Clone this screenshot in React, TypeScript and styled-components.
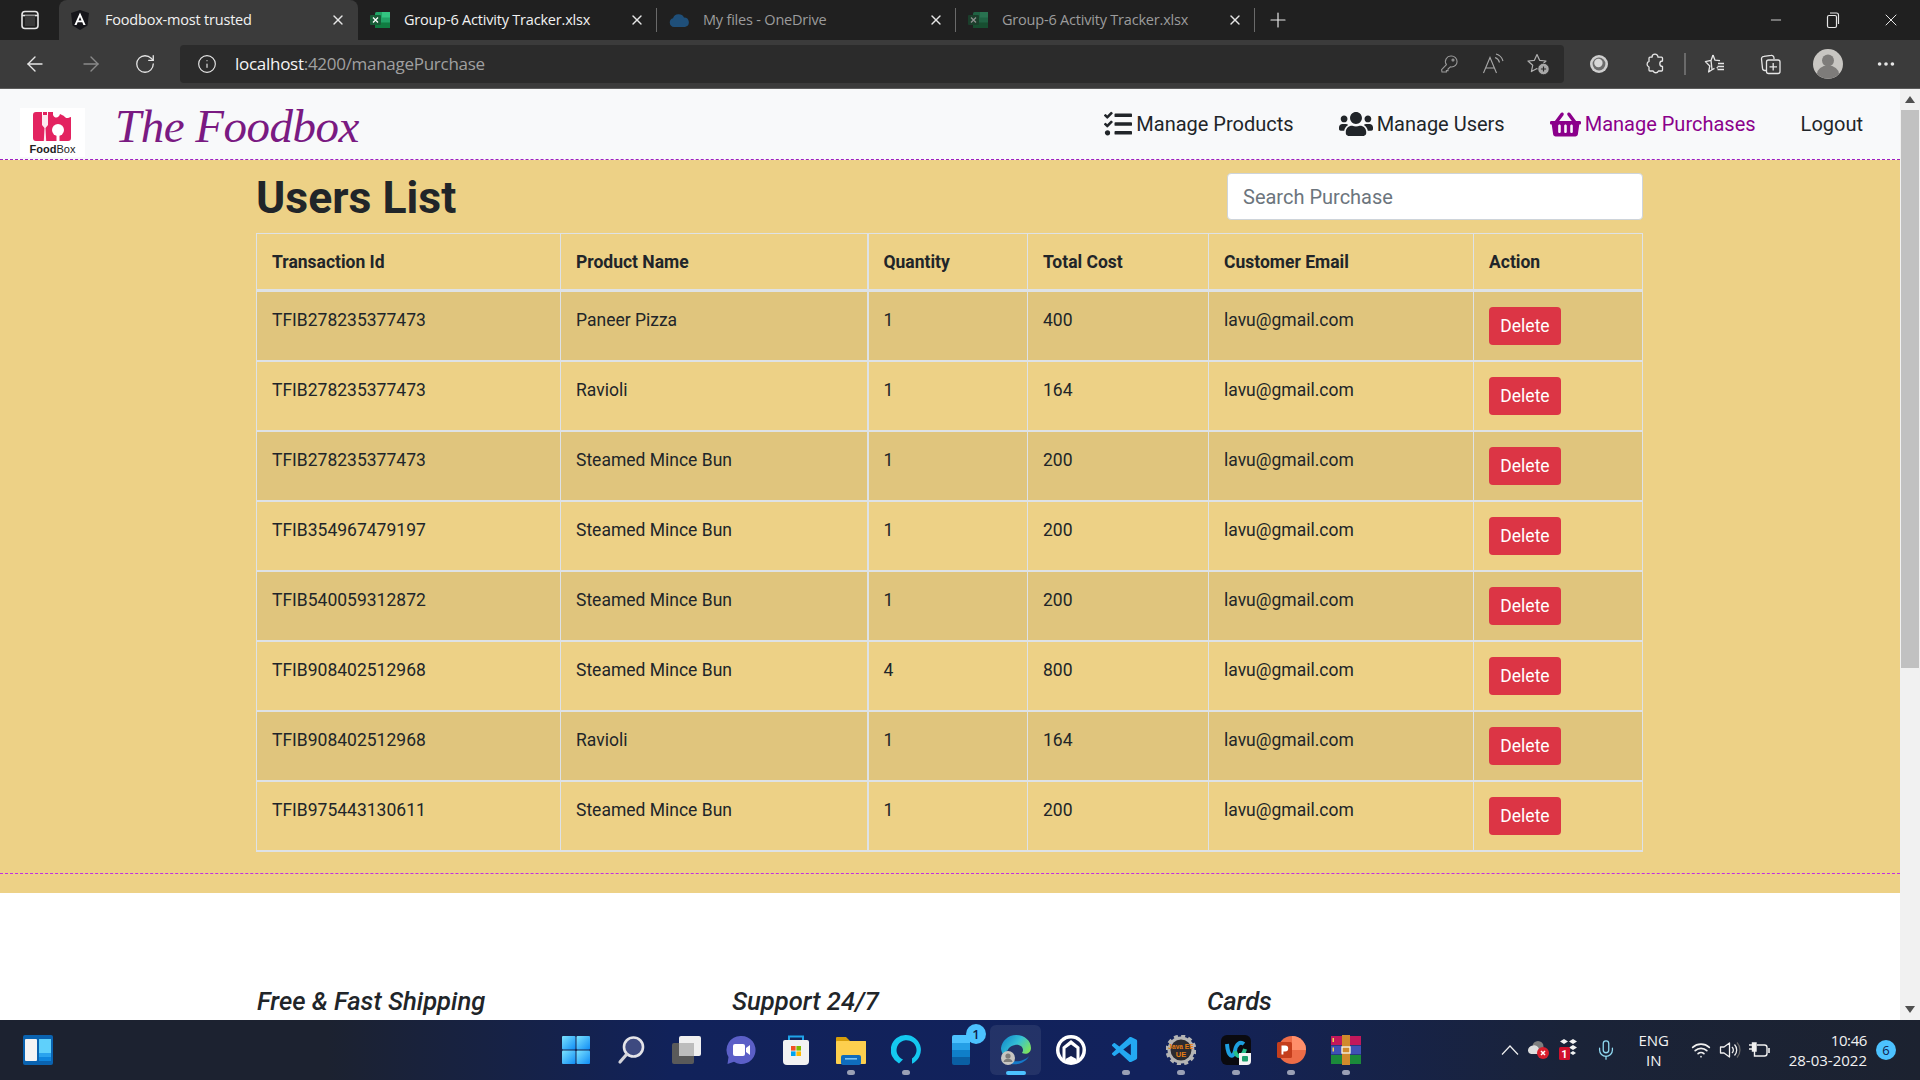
import React from 'react';
import styled, { createGlobalStyle } from 'styled-components';
import { ArrowLeft, ArrowRight, Info, Mic, Minus, MoreHorizontal, Plus, RotateCw, Wifi, X } from 'lucide-react';
import { FaShoppingBasket, FaTasks, FaUsers } from 'react-icons/fa';
import { VscVscode } from 'react-icons/vsc';

const GlobalStyle = createGlobalStyle`
  html, body {
    margin: 0;
    padding: 0;
    overflow: hidden;
    font-family: 'Roboto', sans-serif;
  }
  * {
    box-sizing: border-box;
  }
`;

interface Purchase {
  id: string;
  product: string;
  quantity: number;
  cost: number;
}

const purchases: Purchase[] = [
  { id: 'TFIB278235377473', product: 'Paneer Pizza', quantity: 1, cost: 400 },
  { id: 'TFIB278235377473', product: 'Ravioli', quantity: 1, cost: 164 },
  { id: 'TFIB278235377473', product: 'Steamed Mince Bun', quantity: 1, cost: 200 },
  { id: 'TFIB354967479197', product: 'Steamed Mince Bun', quantity: 1, cost: 200 },
  { id: 'TFIB540059312872', product: 'Steamed Mince Bun', quantity: 1, cost: 200 },
  { id: 'TFIB908402512968', product: 'Steamed Mince Bun', quantity: 4, cost: 800 },
  { id: 'TFIB908402512968', product: 'Ravioli', quantity: 1, cost: 164 },
  { id: 'TFIB975443130611', product: 'Steamed Mince Bun', quantity: 1, cost: 200 },
];

const AngularIcon = () => (
  <svg width="18" height="20" viewBox="0 0 18 20">
    <path d="M9 0 L18 3 L16.5 15.5 L9 20 L1.5 15.5 L0 3 Z" fill="#15151a" />
    <path d="M9 2.5 L14.6 15 H12.4 L11.3 12.2 H6.7 L5.6 15 H3.4 Z M9 7 L7.5 10.4 H10.5 Z" fill="#fff" />
  </svg>
);

const ExcelIcon = ({ dim }: { dim?: boolean }) => (
  <svg width="20" height="20" viewBox="0 0 20 20" opacity={dim ? 0.5 : 1}>
    <rect x="5" y="2" width="15" height="16" rx="1.5" fill="#21a366" />
    <rect x="12" y="2" width="8" height="5.5" fill="#33c481" />
    <rect x="5" y="12.5" width="15" height="5.5" fill="#107c41" />
    <rect x="0" y="5" width="11" height="10" rx="1" fill="#185c37" />
    <path d="M3 7.5 L8 12.5 M8 7.5 L3 12.5" stroke="#fff" strokeWidth="1.3" />
  </svg>
);

const CloudIcon = () => (
  <svg width="20" height="14" viewBox="0 0 20 14" opacity={0.6}>
    <path d="M5 14 A4.5 4.5 0 0 1 4 5.2 A6 6 0 0 1 15 4.5 A4.8 4.8 0 0 1 16 14 Z" fill="#1f6fb5" />
  </svg>
);

const TabsIcon = () => (
  <svg width="20" height="20" viewBox="0 0 20 20" fill="none" stroke="#e6e6e6" strokeWidth="1.6">
    <rect x="2" y="1.5" width="16" height="17" rx="3" />
    <path d="M2 5.5 H18" />
    <rect x="5" y="5.5" width="10" height="10.5" fill="#3a3a3a" stroke="none" />
  </svg>
);

const RestoreIcon = () => (
  <svg width="16" height="20" viewBox="0 0 16 20" fill="none" stroke="#e6e6e6" strokeWidth="1.2">
    <rect x="2.5" y="5.5" width="9" height="12" rx="1.5" />
    <path d="M5 3 H11.5 A2 2 0 0 1 13.5 5 V14" />
  </svg>
);

const KeyIcon = () => (
  <svg width="20" height="20" viewBox="0 0 20 20" fill="none" stroke="#9a9a9a" strokeWidth="1.1">
    <path d="M12.5 2 A5.5 5.5 0 0 1 12.6 13 L11.4 12.8 L9 15 V16.6 H7.4 V18 H3 L2.6 15.6 L7.4 10.6 A5.5 5.5 0 0 1 12.5 2 Z" />
    <circle cx="14" cy="6" r="1" />
  </svg>
);

const ReadAloudIcon = () => (
  <svg width="22" height="22" viewBox="0 0 22 22" fill="none" stroke="#a8a8a8" strokeWidth="1.1">
    <path d="M1.5 20 L8 4.5 L14.5 20 M3.6 15 H12.4" />
    <path d="M13 4.5 A7 7 0 0 1 17.5 9.5 M14 1 A10 10 0 0 1 21 8" />
  </svg>
);

const AddFavIcon = () => (
  <svg width="23" height="22" viewBox="0 0 23 22" fill="none">
    <path d="M10 1.5 L12.6 7.3 L19 8 L14.3 12.3 L15.6 18.6 L10 15.4 L4.4 18.6 L5.7 12.3 L1 8 L7.4 7.3 Z" stroke="#b0b0b0" strokeWidth="1.2" strokeLinejoin="round" />
    <circle cx="16.5" cy="16" r="5.7" fill="#a8a8a8" stroke="#2b2b2b" strokeWidth="0.8" />
    <path d="M16.5 13.4 V18.6 M13.9 16 H19.1" stroke="#2b2b2b" strokeWidth="1.2" />
  </svg>
);

const CircleExtension = () => (
  <svg width="20" height="20" viewBox="0 0 20 20">
    <circle cx="10" cy="10" r="9" fill="#cfcfcf" />
    <circle cx="10" cy="10" r="6.4" fill="#6c6c6c" />
    <circle cx="9.4" cy="9" r="4.2" fill="#d8d8d8" />
  </svg>
);

const ExtensionIcon = () => (
  <svg width="22" height="22" viewBox="0 0 22 22" fill="none" stroke="#e6e6e6" strokeWidth="1.3" strokeLinejoin="round">
    <path d="M8 4.2 A3 3 0 0 1 14 4.2 H17.5 Q18.5 4.2 18.5 5.2 V8 A2.6 2.6 0 0 0 18.5 13.4 V17 Q18.5 18 17.5 18 H14.4 A2.8 2.8 0 0 1 9.2 18 H6 Q5 18 5 17 V14 A3 3 0 0 1 5 8.4 V5.2 Q5 4.2 6 4.2 Z" />
  </svg>
);

const FavoritesIcon = () => (
  <svg width="22" height="22" viewBox="0 0 22 22" fill="none" stroke="#e6e6e6" strokeWidth="1.3" strokeLinejoin="round">
    <path d="M9 2 L11 7.2 L16 7.6 M13 14 L13.6 15.6 M8 16.8 L4.6 19 L5.8 13 L1.4 8.6 L7 7.4 Z M9 2 L7 7.4 M8 16.8 L10.5 15.4" />
    <path d="M14 10.5 H20 M13.5 13.5 H20 M13.5 16.5 H20" />
  </svg>
);

const CollectionsIcon = () => (
  <svg width="22" height="22" viewBox="0 0 22 22" fill="none" stroke="#e6e6e6" strokeWidth="1.3">
    <path d="M6 17.5 H5 A2.5 2.5 0 0 1 2.5 15.4 L1.5 6 A2.5 2.5 0 0 1 4 3.4 L11 2.4 A2.5 2.5 0 0 1 14 5 V6" />
    <rect x="6.5" y="7" width="13.5" height="13.5" rx="2" />
    <path d="M13.2 10 V17.5 M9.5 13.8 H17" />
  </svg>
);

const AvatarIcon = () => (
  <svg width="30" height="30" viewBox="0 0 30 30">
    <circle cx="15" cy="15" r="15" fill="#c8c6c2" />
    <circle cx="15" cy="11.5" r="6" fill="#7e7c7a" />
    <path d="M4 25 A11 8.5 0 0 1 26 25 A15 15 0 0 1 4 25 Z" fill="#7e7c7a" />
  </svg>
);

const LogoMark = () => (
  <svg width="40" height="30" viewBox="0 0 40 30">
    <path
      d="M3 0 H9 V3 H10 V0 H14 V3 H15 V0 H20 V3 C22 7 26 6 27 2 L31 4 C33 7 35 6 38 5 V26 C38 28 37 29 35 29 H3 C1 29 0 28 0 26 V3 C0 1 1 0 3 0 Z"
      fill="#e32360"
    />
    <path d="M9 3 V13 L11.5 16 L10.8 29 H13.2 L12.5 16 L15 13 V3 Z" fill="#fff" opacity="0.9" />
    <circle cx="25" cy="18" r="6" fill="#fff" />
    <rect x="23.5" y="22" width="3" height="7" fill="#fff" />
  </svg>
);

const WinIcon = () => (
  <svg width="30" height="30" viewBox="0 0 30 30">
    <defs>
      <linearGradient id="winGrad" x1="0" y1="0" x2="1" y2="1">
        <stop offset="0" stopColor="#7ce3ff" />
        <stop offset="1" stopColor="#0f8cf5" />
      </linearGradient>
    </defs>
    <rect x="1" y="1" width="13.5" height="13.5" rx="1" fill="url(#winGrad)" />
    <rect x="15.5" y="1" width="13.5" height="13.5" rx="1" fill="url(#winGrad)" />
    <rect x="1" y="15.5" width="13.5" height="13.5" rx="1" fill="url(#winGrad)" />
    <rect x="15.5" y="15.5" width="13.5" height="13.5" rx="1" fill="url(#winGrad)" />
  </svg>
);

const SearchTaskIcon = () => (
  <svg width="30" height="30" viewBox="0 0 30 30">
    <circle cx="17.5" cy="12" r="9.5" fill="#3e4a80" stroke="#e4e4e8" strokeWidth="2.6" />
    <path d="M10.5 19.5 L4 27" stroke="#d4d4da" strokeWidth="3.2" strokeLinecap="round" />
  </svg>
);

const TaskViewIcon = () => (
  <svg width="30" height="30" viewBox="0 0 30 30">
    <rect x="1" y="8" width="22" height="21" rx="2" fill="#5a5a5a" />
    <rect x="8" y="1" width="22" height="20" rx="2" fill="#f0f0f0" />
    <rect x="8" y="8" width="15" height="13" fill="#bdbdbd" />
  </svg>
);

const TeamsIcon = () => (
  <svg width="30" height="30" viewBox="0 0 30 30">
    <path d="M15.5 1 A14 14 0 1 1 8 26.8 L1.5 29 L2.5 22 A14 14 0 0 1 15.5 1 Z" fill="#5b5fc7" />
    <rect x="7" y="9" width="12" height="12" rx="2" fill="#fff" />
    <path d="M20 13 L24 10 V20 L20 17 Z" fill="#fff" />
  </svg>
);

const StoreIcon = () => (
  <svg width="30" height="30" viewBox="0 0 30 30">
    <path d="M8 6 V1.5 H22 V6" fill="none" stroke="#1fa3ea" strokeWidth="2" />
    <path d="M2 7 Q2 5 4 5 H26 Q28 5 28 7 V26 Q28 30 24 30 H6 Q2 30 2 26 Z" fill="#f2f2f2" />
    <rect x="10" y="11" width="4.6" height="4.6" fill="#f25022" />
    <rect x="15.4" y="11" width="4.6" height="4.6" fill="#7fba00" />
    <rect x="10" y="16.4" width="4.6" height="4.6" fill="#00a4ef" />
    <rect x="15.4" y="16.4" width="4.6" height="4.6" fill="#ffb900" />
  </svg>
);

const FolderIcon = () => (
  <svg width="30" height="30" viewBox="0 0 30 30">
    <path d="M0 3 Q0 2 1 2 H10 L14 6 H30 V12 H0 Z" fill="#d69d0a" />
    <rect x="0" y="6" width="30" height="23" rx="1" fill="#fdcf4e" />
    <rect x="5" y="20" width="20" height="10" rx="2" fill="#0f6cbd" />
    <rect x="9" y="23" width="12" height="1.6" fill="#7fc4f2" />
  </svg>
);

const AlexaIcon = () => (
  <svg width="30" height="30" viewBox="0 0 30 30">
    <path d="M15 0 A15 15 0 0 1 21 28.7 V23.5 A10 10 0 1 0 12 24.5 L8 28.4 A15 15 0 0 1 15 0 Z" fill="#14c8f0" />
  </svg>
);

const TodoIcon = () => (
  <svg width="18" height="30" viewBox="0 0 18 30">
    <path d="M0 2 Q0 0 2 0 H16 Q18 0 18 2 V8 H0 Z" fill="#4cc2ff" />
    <rect y="8" width="18" height="7" fill="#259fe6" />
    <rect y="15" width="18" height="7" fill="#0f7fc9" />
    <path d="M0 22 H18 V28 Q18 30 16 30 H2 Q0 30 0 28 Z" fill="#0a5fa3" />
  </svg>
);

const EdgeIcon = () => (
  <svg width="32" height="32" viewBox="0 0 32 32">
    <defs>
      <linearGradient id="edgeGrad" x1="0" y1="0" x2="1" y2="0.6">
        <stop offset="0" stopColor="#0c7fc9" />
        <stop offset="0.55" stopColor="#35c1d6" />
        <stop offset="1" stopColor="#7ee35c" />
      </linearGradient>
    </defs>
    <path d="M16 1 C25 1 31 7 31 14 C31 19 26 21 22 19 C25 15 21 10 15 11 C8 12 5 19 7 24 C2 21 1 16 1 14 C2 7 8 1 16 1 Z" fill="url(#edgeGrad)" />
    <path d="M7 24 C11 28 20 30 28 24 C22 31 12 32 7 28 Z M7 14 C6 20 8 26 13 27 C19 28 26 26 29 22 C25 31 9 33 5 22 Z" fill="#1579c9" />
    <circle cx="8" cy="24" r="7" fill="#c8c6c2" />
    <circle cx="8" cy="22" r="2.6" fill="#7e7c7a" />
    <path d="M3.5 28 A4.6 4 0 0 1 12.5 28 Z" fill="#7e7c7a" />
  </svg>
);

const RingHouseIcon = () => (
  <svg width="30" height="30" viewBox="0 0 30 30">
    <circle cx="15" cy="15" r="15" fill="#fff" />
    <circle cx="15" cy="15" r="11.5" fill="#14204f" />
    <path d="M6.5 12 L15 5 L23.5 12 V24 L20.5 26 V13.5 L15 9.5 L9.5 13.5 V26 L6.5 24 Z" fill="#fff" />
    <path d="M9.5 24 L15 21 L20.5 24 V28 H9.5 Z" fill="#fff" />
  </svg>
);

const JavaIcon = () => (
  <svg width="30" height="30" viewBox="0 0 30 30">
    <circle cx="15" cy="15" r="12" fill="#2a2a30" stroke="#b5b5b5" strokeWidth="3" />
    <circle cx="15" cy="15" r="14" fill="none" stroke="#b5b5b5" strokeWidth="3" strokeDasharray="4 3.3" />
    <text x="15" y="13.5" textAnchor="middle" fontSize="6.6" fontWeight="700" fill="#e67e12" fontFamily="Liberation Sans, sans-serif">Java EE</text>
    <text x="15" y="22" textAnchor="middle" fontSize="7.5" fontWeight="700" fill="#e67e12" fontFamily="Liberation Sans, sans-serif">UE</text>
  </svg>
);

const WebexIcon = () => (
  <svg width="30" height="30" viewBox="0 0 30 30">
    <rect width="30" height="30" rx="6" fill="#0a0a0f" />
    <path d="M6 9 C7 22 12 24 14 16 C15 9 19 6 23 9" fill="none" stroke="#1d9fe0" strokeWidth="4" />
    <path d="M14 16 C16 24 22 22 24 14" fill="none" stroke="#26c08c" strokeWidth="4" />
    <path d="M18 18 H30 V26 Q30 30 26 30 H18 Z" fill="#f4f4f4" />
    <rect x="21" y="21" width="6" height="5.5" rx="1" fill="#1d9f6c" />
  </svg>
);

const PowerpointIcon = () => (
  <svg width="30" height="30" viewBox="0 0 30 30">
    <circle cx="16" cy="15" r="14" fill="#ed6c47" />
    <path d="M16 1 A14 14 0 0 1 30 15 H16 Z" fill="#ff8f6b" />
    <rect x="1" y="7" width="15" height="16" rx="1.5" fill="#c43e1c" />
    <path d="M5.5 19.5 V10.5 H9.2 A3 3 0 0 1 9.2 16.5 H7.4 V19.5 Z" fill="#fff" />
  </svg>
);

const RarIcon = () => (
  <svg width="30" height="30" viewBox="0 0 30 30">
    <rect y="1" width="30" height="9" fill="#c2185b" />
    <rect y="10.5" width="30" height="9" fill="#3f51b5" />
    <rect y="20" width="30" height="9" fill="#1b8a3a" />
    <rect x="11" y="0" width="8" height="30" fill="#d08a2c" />
    <rect x="11" y="12" width="8" height="6" fill="none" stroke="#f2efe2" strokeWidth="1.4" />
    <rect x="1.5" y="3" width="1.5" height="4" fill="#f5d34c" />
    <rect x="1.5" y="12.5" width="1.5" height="4" fill="#f5d34c" />
  </svg>
);

const WidgetsIcon = () => (
  <svg width="30" height="30" viewBox="0 0 30 30">
    <rect width="30" height="30" rx="2" fill="#0a63b0" />
    <rect x="2" y="4" width="12" height="22" rx="1" fill="#f4f4f4" />
    <rect x="16" y="4" width="12" height="14" fill="#5fd0fb" />
    <rect x="16" y="18" width="12" height="4" fill="#2aa3ee" />
    <rect x="16" y="22" width="12" height="4" fill="#0f86de" />
  </svg>
);

const TrayChevron = () => (
  <svg width="18" height="12" viewBox="0 0 18 12" fill="none" stroke="#f0f0f0" strokeWidth="1.2">
    <path d="M1 10.5 L9 2 L17 10.5" />
  </svg>
);

const OneDriveErrorIcon = () => (
  <svg width="22" height="20" viewBox="0 0 22 20">
    <circle cx="10" cy="6.5" r="5.5" fill="#7e7e7e" />
    <path d="M0 11 A5 5 0 0 1 5 5.5 A5 5 0 0 1 11 9 L13 14 H3 A3.5 3.5 0 0 1 0 11 Z" fill="#dedede" />
    <circle cx="15" cy="13" r="6" fill="#d81e2c" />
    <path d="M13 11 L17 15 M17 11 L13 15" stroke="#fff" strokeWidth="1.5" />
  </svg>
);

const DropboxTrayIcon = () => (
  <svg width="20" height="24" viewBox="0 0 20 24">
    <path d="M5 1 L9 3.5 L5 6 L1 3.5 Z M14 1 L18 3.5 L14 6 L10 3.5 Z M14 7 L18 9.5 L14 12 L10 9.5 Z M14 13 L17 15 L14 17 L11 15 Z" fill="#f2f2f2" />
    <rect x="0" y="9" width="11" height="13" rx="1.5" fill="#d0102c" />
    <text x="5.5" y="19.5" textAnchor="middle" fontSize="11" fontWeight="700" fill="#fff" fontFamily="Roboto, sans-serif">1</text>
  </svg>
);

const SpeakerIcon = () => (
  <svg width="22" height="20" viewBox="0 0 22 20" fill="none" stroke="#f0f0f0" strokeWidth="1.3">
    <path d="M1.5 7 H5 L10.5 3 V17 L5 13 H1.5 Z" strokeLinejoin="round" />
    <path d="M13 7 A4 4 0 0 1 13 13" />
    <path d="M15.5 4.5 A8 8 0 0 1 15.5 15.5" />
    <path d="M18 2.5 A11 11 0 0 1 18 17.5" stroke="#666" />
  </svg>
);

const PowerIcon = () => (
  <svg width="22" height="20" viewBox="0 0 22 20" fill="none" stroke="#f0f0f0" strokeWidth="1.4">
    <path d="M0 5 H4 M0 9 H4" />
    <path d="M3.5 3 H7 V11 H3.5 Z" fill="#f0f0f0" />
    <path d="M5.5 11 V16 H15.5 Q18 16 18 13.5 V7.5 Q18 5 15.5 5 H8" />
    <path d="M20 8 V13" strokeWidth="1.6" />
  </svg>
);

const centerApps: Array<{ key: string; icon: React.ReactNode; dot?: boolean; active?: boolean; badge?: string }> = [
  { key: 'win', icon: <WinIcon /> },
  { key: 'search', icon: <SearchTaskIcon /> },
  { key: 'view', icon: <TaskViewIcon /> },
  { key: 'teams', icon: <TeamsIcon /> },
  { key: 'store', icon: <StoreIcon /> },
  { key: 'files', icon: <FolderIcon />, dot: true },
  { key: 'alexa', icon: <AlexaIcon />, dot: true },
  { key: 'todo', icon: <TodoIcon />, badge: '1' },
  { key: 'edge', icon: <EdgeIcon />, active: true },
  { key: 'ring', icon: <RingHouseIcon /> },
  { key: 'code', icon: <VscVscode size={31} color="#23a9f2" />, dot: true },
  { key: 'java', icon: <JavaIcon />, dot: true },
  { key: 'webex', icon: <WebexIcon />, dot: true },
  { key: 'ppt', icon: <PowerpointIcon />, dot: true },
  { key: 'rar', icon: <RarIcon />, dot: true },
];

const App: React.FC = () => {
  return (
    <Screen>
      <GlobalStyle />
      <TabStrip>
        <SideButton>
          <TabsIcon />
        </SideButton>
        <Tab $active>
          <TabFavicon>
            <AngularIcon />
          </TabFavicon>
          <TabTitle $active>Foodbox-most trusted</TabTitle>
          <X size={16} color="#e6e6e6" />
        </Tab>
        <Tab $divider>
          <TabFavicon>
            <ExcelIcon />
          </TabFavicon>
          <TabTitle>Group-6 Activity Tracker.xlsx</TabTitle>
          <X size={16} color="#e6e6e6" />
        </Tab>
        <Tab $divider>
          <TabFavicon>
            <CloudIcon />
          </TabFavicon>
          <TabTitle $dim>My files - OneDrive</TabTitle>
          <X size={16} color="#e6e6e6" />
        </Tab>
        <Tab $divider>
          <TabFavicon>
            <ExcelIcon dim />
          </TabFavicon>
          <TabTitle $dim>Group-6 Activity Tracker.xlsx</TabTitle>
          <X size={16} color="#e6e6e6" />
        </Tab>
        <NewTab>
          <Plus size={24} strokeWidth={1.2} color="#e6e6e6" />
        </NewTab>
        <WindowControls>
          <Minus size={16} strokeWidth={1.3} color="#e6e6e6" />
          <RestoreIcon />
          <X size={20} strokeWidth={1.2} color="#e6e6e6" />
        </WindowControls>
      </TabStrip>

      <Toolbar>
        <NavButtons>
          <ArrowLeft size={24} strokeWidth={1.4} color="#e6e6e6" />
          <ArrowRight size={24} strokeWidth={1.4} color="#8a8a8a" />
          <RotateCw size={22} strokeWidth={1.4} color="#e6e6e6" />
        </NavButtons>
        <AddressBar>
          <Info size={20} strokeWidth={1.4} color="#e6e6e6" />
          <AddressText>
            localhost<AddressRest>:4200/managePurchase</AddressRest>
          </AddressText>
          <AddressIcons>
            <KeyIcon />
            <ReadAloudIcon />
            <AddFavIcon />
          </AddressIcons>
        </AddressBar>
        <ToolIcons>
          <ToolSlot>
            <CircleExtension />
          </ToolSlot>
          <ToolSlot>
            <ExtensionIcon />
          </ToolSlot>
          <ToolDivider />
          <ToolSlot>
            <FavoritesIcon />
          </ToolSlot>
          <ToolSlot>
            <CollectionsIcon />
          </ToolSlot>
          <ToolSlot $wide>
            <AvatarIcon />
          </ToolSlot>
          <ToolSlot $wide>
            <MoreHorizontal size={22} strokeWidth={2} color="#e6e6e6" />
          </ToolSlot>
        </ToolIcons>
      </Toolbar>

      <Viewport>
        <Page>
          <TopNav>
            <Brand>
              <LogoBox>
                <LogoMark />
                <LogoWord>
                  Food<LogoWordLight>Box</LogoWordLight>
                </LogoWord>
              </LogoBox>
              <BrandName>The Foodbox</BrandName>
            </Brand>
            <NavLinks>
              <NavLink>
                <FaTasks size={28} />
                Manage Products
              </NavLink>
              <NavLink>
                <FaUsers size={34} />
                Manage Users
              </NavLink>
              <NavLink $active>
                <FaShoppingBasket size={31} color="#8b008b" />
                Manage Purchases
              </NavLink>
              <NavLink>Logout</NavLink>
            </NavLinks>
          </TopNav>

          <MainSection>
            <Heading>
              <Title>Users List</Title>
              <SearchInput placeholder="Search Purchase" />
            </Heading>
            <Table>
              <colgroup>
                <col style={{ width: 304 }} />
                <col style={{ width: 307 }} />
                <col style={{ width: 160 }} />
                <col style={{ width: 181 }} />
                <col style={{ width: 265 }} />
                <col style={{ width: 169 }} />
              </colgroup>
              <thead>
                <tr>
                  <HeadCell>Transaction Id</HeadCell>
                  <HeadCell>Product Name</HeadCell>
                  <HeadCell $thick>Quantity</HeadCell>
                  <HeadCell>Total Cost</HeadCell>
                  <HeadCell>Customer Email</HeadCell>
                  <HeadCell>Action</HeadCell>
                </tr>
              </thead>
              <tbody>
                {purchases.map((purchase, index) => (
                  <Row key={index} $striped={index % 2 === 0}>
                    <Cell>{purchase.id}</Cell>
                    <Cell>{purchase.product}</Cell>
                    <Cell $thick>{purchase.quantity}</Cell>
                    <Cell>{purchase.cost}</Cell>
                    <Cell>lavu@gmail.com</Cell>
                    <Cell>
                      <DeleteButton>Delete</DeleteButton>
                    </Cell>
                  </Row>
                ))}
              </tbody>
            </Table>
            <SectionRule />
          </MainSection>

          <Footer>
            <FooterHeading>Free &amp; Fast Shipping</FooterHeading>
            <FooterHeading>Support 24/7</FooterHeading>
            <FooterHeading>Cards</FooterHeading>
          </Footer>
        </Page>
        <Scrollbar>
          <ScrollArrow $up />
          <ScrollTrack>
            <ScrollThumb />
          </ScrollTrack>
          <ScrollArrow />
        </Scrollbar>
      </Viewport>

      <Taskbar>
        <TaskLeft>
          <WidgetsIcon />
        </TaskLeft>
        <TaskCenter>
          {centerApps.map((app) => (
            <TaskSlot key={app.key} $active={app.active}>
              {app.icon}
              {app.badge && <TaskBadge>{app.badge}</TaskBadge>}
              {app.dot && <RunningDot />}
              {app.active && <ActiveBar />}
            </TaskSlot>
          ))}
        </TaskCenter>
        <TaskRight>
          <TrayIcons>
            <TrayChevron />
            <OneDriveErrorIcon />
            <DropboxTrayIcon />
          </TrayIcons>
          <MicSlot>
            <Mic size={22} strokeWidth={1.4} color="#8fd8f0" />
          </MicSlot>
          <LangBox>
            <span>ENG</span>
            <span>IN</span>
          </LangBox>
          <SystemIcons>
            <Wifi size={20} strokeWidth={2} color="#f0f0f0" />
            <SpeakerIcon />
            <PowerIcon />
          </SystemIcons>
          <Clock>
            <ClockTime>10:46</ClockTime>
            <span>28-03-2022</span>
          </Clock>
          <NotifyBadge>6</NotifyBadge>
        </TaskRight>
      </Taskbar>
    </Screen>
  );
};

export default App;

const Screen = styled.div`
  width: 1920px;
  height: 1080px;
  display: flex;
  flex-direction: column;
  overflow: hidden;
  background: #fff;
`;

const TabStrip = styled.div`
  height: 40px;
  flex: none;
  display: flex;
  align-items: stretch;
  background: #202020;
  font-family: 'Open Sans', sans-serif;
`;

const SideButton = styled.div`
  width: 59px;
  display: flex;
  align-items: center;
  justify-content: center;
`;

const Tab = styled.div<{ $active?: boolean; $divider?: boolean }>`
  width: 299px;
  height: 40px;
  flex: none;
  display: flex;
  align-items: center;
  padding: 0 12px 0 12px;
  position: relative;
  background: ${(p) => (p.$active ? '#3b3b3b' : 'transparent')};
  border-radius: ${(p) => (p.$active ? '8px 8px 0 0' : '0')};

  &::after {
    content: '';
    display: ${(p) => (p.$divider ? 'block' : 'none')};
    position: absolute;
    right: 0;
    top: 8px;
    bottom: 8px;
    width: 1px;
    background: #6a6a6a;
  }
`;

const TabFavicon = styled.div`
  width: 34px;
  flex: none;
  display: flex;
  align-items: center;
`;

const TabTitle = styled.div<{ $active?: boolean; $dim?: boolean }>`
  flex: 1;
  font-size: 14.5px;
  line-height: 20px;
  margin-top: -1px;
  white-space: nowrap;
  letter-spacing: -0.2px;
  color: ${(p) => (p.$dim ? '#9c9c9c' : '#f2f2f2')};
`;

const NewTab = styled.div`
  width: 46px;
  display: flex;
  align-items: center;
  justify-content: center;
`;

const WindowControls = styled.div`
  margin-left: auto;
  width: 152px;
  padding-right: 19px;
  display: flex;
  align-items: center;
  justify-content: space-between;
`;

const Toolbar = styled.div`
  height: 49px;
  flex: none;
  display: flex;
  align-items: center;
  background: #3b3b3b;
  border-bottom: 1px solid #5c5c5c;
  padding-bottom: 1px;
`;

const NavButtons = styled.div`
  width: 180px;
  padding: 0 24px 0 23px;
  display: flex;
  align-items: center;
  justify-content: space-between;
`;

const AddressBar = styled.div`
  width: 1384px;
  height: 38px;
  display: flex;
  align-items: center;
  background: #2b2b2b;
  border-radius: 4px;
  padding: 0 14px 0 17px;
`;

const AddressText = styled.div`
  margin-left: 18px;
  flex: 1;
  font-family: 'Open Sans', sans-serif;
  font-size: 17px;
  letter-spacing: -0.28px;
  color: #f5f5f5;
`;

const AddressRest = styled.span`
  color: #a0a0a0;
`;

const AddressIcons = styled.div`
  display: flex;
  align-items: center;
  gap: 23px;
`;

const ToolIcons = styled.div`
  flex: 1;
  padding-left: 7px;
  display: flex;
  align-items: center;
`;

const ToolSlot = styled.div<{ $wide?: boolean }>`
  width: ${(p) => (p.$wide ? '58px' : '56px')};
  flex: none;
  display: flex;
  align-items: center;
  justify-content: center;
`;

const ToolDivider = styled.div`
  width: 2px;
  margin: 0 1px;
  height: 22px;
  background: #6a6a6a;
`;

const Viewport = styled.div`
  flex: 1;
  min-height: 0;
  display: flex;
`;

const Page = styled.div`
  flex: 1;
  min-width: 0;
  overflow: hidden;
  background: #fff;
`;

const TopNav = styled.nav`
  height: 71px;
  display: flex;
  align-items: center;
  justify-content: space-between;
  padding: 0 37px 0 20px;
  background: #f8f9fa;
  border-bottom: 1px dashed #a020c0;
`;

const Brand = styled.div`
  display: flex;
  align-items: flex-end;
  gap: 30px;
  height: 100%;
`;

const LogoBox = styled.div`
  width: 65px;
  height: 49px;
  margin-bottom: 2px;
  padding-top: 4px;
  display: flex;
  flex-direction: column;
  align-items: center;
  background: #fff;
`;

const LogoWord = styled.div`
  font-family: 'Liberation Sans', sans-serif;
  font-size: 11px;
  line-height: 12px;
  margin-top: 1px;
  font-weight: 700;
  color: #222;
`;

const LogoWordLight = styled.span`
  font-weight: 400;
`;

const BrandName = styled.div`
  font-family: 'Liberation Serif', serif;
  font-style: italic;
  font-size: 47px;
  line-height: 60px;
  margin-bottom: 3px;
  letter-spacing: -0.5px;
  white-space: nowrap;
  color: #7a1a82;
`;

const NavLinks = styled.div`
  display: flex;
  align-items: center;
  gap: 45px;
`;

const NavLink = styled.a<{ $active?: boolean }>`
  display: flex;
  align-items: center;
  gap: 4px;
  font-size: 20px;
  color: ${(p) => (p.$active ? '#8b008b' : '#212529')};
`;

const MainSection = styled.section`
  background: #edd186;
  padding: 13px 0 19px;
`;

const Heading = styled.div`
  margin: 0 257px 13px 256px;
  display: flex;
  align-items: center;
  justify-content: space-between;
`;

const Title = styled.h1`
  margin: 0;
  font-size: 44.5px;
  line-height: 46px;
  padding-top: 2px;
  height: 47px;
  font-weight: 700;
  color: #212529;
`;

const SearchInput = styled.input`
  width: 416px;
  height: 47px;
  padding: 0 15px;
  font-family: 'Roboto', sans-serif;
  font-size: 20px;
  background: #fff;
  border: 1px solid #ced4da;
  border-radius: 4px;
  outline: none;

  &::placeholder {
    color: #6c757d;
    opacity: 1;
  }
`;

const Table = styled.table`
  width: 1386px;
  margin-left: 256px;
  border-collapse: collapse;
  table-layout: fixed;
  color: #212529;
  font-size: 17.5px;
`;

const HeadCell = styled.th<{ $thick?: boolean }>`
  height: 57px;
  padding: 0 15px;
  text-align: left;
  font-weight: 700;
  border: 1px solid #dee2e6;
  border-left-width: ${(p) => (p.$thick ? '2px' : '1px')};
  border-bottom: 3px solid #dee2e6;
`;

const Row = styled.tr<{ $striped?: boolean }>`
  background: ${(p) => (p.$striped ? '#e0c57d' : 'transparent')};
`;

const Cell = styled.td<{ $thick?: boolean }>`
  height: 70px;
  padding: 16px 15px 0;
  vertical-align: top;
  line-height: 24px;
  border-left: ${(p) => (p.$thick ? '2px' : '1px')} solid #dee2e6;
  border-right: 1px solid #dee2e6;
  border-bottom: 2px solid #dee2e6;
`;

const DeleteButton = styled.button`
  width: 72px;
  height: 38px;
  margin-top: -1px;
  padding: 0;
  font-family: 'Roboto', sans-serif;
  font-size: 17.5px;
  color: #fff;
  background: #dc3545;
  border: none;
  border-radius: 4px;
  display: block;
`;

const SectionRule = styled.div`
  margin-top: 21px;
  border-top: 1px dashed #c030e0;
`;

const Footer = styled.div`
  margin-left: 257px;
  padding-top: 93px;
  display: grid;
  grid-template-columns: 475px 475px 475px;
`;

const FooterHeading = styled.h5`
  margin: 0;
  font-size: 25.6px;
  line-height: 31px;
  font-weight: 500;
  font-style: italic;
  color: #212529;
`;

const Scrollbar = styled.div`
  width: 20px;
  flex: none;
  display: flex;
  flex-direction: column;
  background: #f1f1f1;
`;

const ScrollArrow = styled.div<{ $up?: boolean }>`
  height: 21px;
  flex: none;
  display: flex;
  align-items: center;
  justify-content: center;

  &::before {
    content: '';
    border-left: 5px solid transparent;
    border-right: 5px solid transparent;
    border-${(p) => (p.$up ? 'bottom' : 'top')}: 7px solid #505050;
  }
`;

const ScrollTrack = styled.div`
  flex: 1;
`;

const ScrollThumb = styled.div`
  height: 558px;
  margin: 0 1px;
  background: #c1c1c1;
`;

const Taskbar = styled.div`
  height: 60px;
  flex: none;
  display: grid;
  grid-template-columns: 1fr auto 1fr;
  align-items: center;
  color: #f2f2f2;
  font-family: 'Open Sans', sans-serif;
  background: linear-gradient(90deg, #1c2230 0%, #1c2230 17%, #11225a 35%, #12225c 60%, #1a2338 82%, #1c2230 100%);
`;

const TaskLeft = styled.div`
  padding-left: 23px;
  display: flex;
`;

const TaskCenter = styled.div`
  margin-left: 1px;
  display: flex;
  align-items: center;
`;

const TaskSlot = styled.div<{ $active?: boolean }>`
  width: 55px;
  height: 50px;
  position: relative;
  display: flex;
  align-items: center;
  justify-content: center;

  &::before {
    content: '';
    display: ${(p) => (p.$active ? 'block' : 'none')};
    position: absolute;
    left: 2px;
    right: 2px;
    top: 0;
    bottom: 0;
    background: rgba(255, 255, 255, 0.08);
    border-radius: 6px;
    z-index: 0;
  }

  svg {
    position: relative;
  }
`;

const TaskBadge = styled.div`
  position: absolute;
  top: -1px;
  right: 2px;
  width: 20px;
  height: 20px;
  border-radius: 50%;
  background: #4cc2ff;
  color: #10204a;
  font-size: 13px;
  font-weight: 600;
  line-height: 20px;
  text-align: center;
`;

const RunningDot = styled.div`
  position: absolute;
  left: 50%;
  bottom: 0;
  width: 8px;
  height: 5px;
  margin-left: -4px;
  border-radius: 3px;
  background: #9aa0b5;
`;

const ActiveBar = styled.div`
  position: absolute;
  left: 50%;
  bottom: 0;
  width: 20px;
  height: 4px;
  margin-left: -10px;
  border-radius: 2px;
  background: #4cc2ff;
`;

const TaskRight = styled.div`
  display: flex;
  align-items: center;
  justify-content: flex-end;
  padding-right: 24px;
`;

const TrayIcons = styled.div`
  display: flex;
  align-items: center;
  gap: 9px;
`;

const MicSlot = styled.div`
  margin-left: 16px;
  display: flex;
`;

const LangBox = styled.div`
  width: 60px;
  margin-left: 7px;
  display: flex;
  flex-direction: column;
  align-items: center;
  font-size: 15px;
  line-height: 20px;
`;

const SystemIcons = styled.div`
  margin-left: 7px;
  display: flex;
  align-items: center;
  gap: 8px;
`;

const Clock = styled.div`
  margin-left: 18px;
  display: flex;
  flex-direction: column;
  align-items: flex-end;
  font-size: 15px;
  line-height: 20px;
`;

const ClockTime = styled.span`
  letter-spacing: -0.4px;
`;

const NotifyBadge = styled.div`
  margin-left: 9px;
  width: 20px;
  height: 20px;
  border-radius: 50%;
  background: #4cc2ff;
  color: #10204a;
  font-size: 13px;
  line-height: 20px;
  text-align: center;
`;
